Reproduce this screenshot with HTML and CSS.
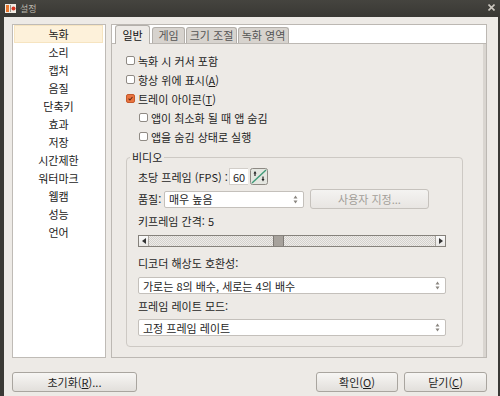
FILE: index.html
```html
<!DOCTYPE html>
<html lang="ko">
<head>
	<meta charset="UTF-8">
	<meta name="viewport" content="width=device-width, initial-scale=1.0">
	<title>설정</title>
	<link rel="stylesheet" href="styles.css">
</head>
<body>
	<div class="window">
		<div class="titlebar">
			<svg class="app-icon" viewBox="0 0 11 9">
				<rect x="0" y="0" width="11" height="9" fill="#f1ece4"/>
				<rect x="1" y="1" width="3" height="7" fill="#e8762d"/>
				<rect x="5" y="1" width="1" height="7" fill="#9a9288"/>
				<circle cx="8.5" cy="4.5" r="2" fill="#d9331f"/>
			</svg>
			<span class="title">설정</span>
			<svg class="close" viewBox="0 0 7 7">
				<path d="M0.5 0.5 L6.5 6.5 M6.5 0.5 L0.5 6.5" stroke="#cbc7bf" stroke-width="1.6"/>
			</svg>
		</div>

		<div class="content">
			<div class="main">
				<ul class="sidebar">
					<li class="active">녹화</li>
					<li>소리</li>
					<li>캡처</li>
					<li>음질</li>
					<li>단축키</li>
					<li>효과</li>
					<li>저장</li>
					<li>시간제한</li>
					<li>워터마크</li>
					<li>웹캠</li>
					<li>성능</li>
					<li>언어</li>
				</ul>

				<div class="tabs">
					<div class="tab-bar">
						<div class="tab active t-general">일반</div>
						<div class="tab t-game">게임</div>
						<div class="tab t-size">크기 조절</div>
						<div class="tab t-area">녹화 영역</div>
					</div>

					<div class="tab-body">
						<div class="check"><span class="box"></span><span>녹화 시 커서 포함</span></div>
						<div class="check"><span class="box"></span><span>항상 위에 표시(<u>A</u>)</span></div>
						<div class="check"><span class="box checked"><svg viewBox="0 0 9 9"><path d="M2 4.6 L3.8 6.4 L7 2.6" fill="none" stroke="#5a2a14" stroke-width="1.3"/></svg></span><span>트레이 아이콘(<u>T</u>)</span></div>
						<div class="check sub"><span class="box"></span><span>앱이 최소화 될 때 앱 숨김</span></div>
						<div class="check sub"><span class="box"></span><span>앱을 숨김 상태로 실행</span></div>

						<fieldset class="group">
							<legend>비디오</legend>

							<div class="fps-row">
								<span class="fps-label">초당 프레임 (FPS) :</span>
								<span class="spin-input">60</span>
								<svg class="spin-btn" viewBox="0 0 18 17">
									<rect x="0.5" y="0.5" width="17" height="16" rx="2" fill="#e4e6e0" stroke="#8e8a84"/>
									<path d="M2 15 L16 2" stroke="#3f9a78" stroke-width="1.4"/>
									<path d="M3.5 5.5 L5 3 L6.5 5.5 Z" fill="#222"/>
									<rect x="4.4" y="5" width="1.2" height="3" fill="#222"/>
									<path d="M11.5 11 L13 13.5 L14.5 11 Z" fill="#222"/>
									<rect x="12.4" y="8.5" width="1.2" height="3" fill="#222"/>
								</svg>
							</div>

							<div class="quality-row">
								<span class="quality-label">품질:</span>
								<div class="combo quality-combo">
									<span>매우 높음</span>
									<svg class="updown" viewBox="0 0 5 9"><path d="M0.5 3.5 L2.5 0.5 L4.5 3.5 Z M0.5 5.5 L2.5 8.5 L4.5 5.5 Z" fill="#8a8680"/></svg>
								</div>
								<div class="btn disabled custom">사용자 지정...</div>
							</div>

							<div class="label key-label">키프레임 간격: 5</div>

							<div class="slider">
								<span class="arrow"><svg viewBox="0 0 4 6"><path d="M4 0 L0 3 L4 6 Z" fill="#333"/></svg></span>
								<div class="trough">
									<span class="thumb" style="left: 124px"></span>
								</div>
								<span class="arrow"><svg viewBox="0 0 4 6"><path d="M0 0 L4 3 L0 6 Z" fill="#333"/></svg></span>
							</div>

							<div class="label dec-label">디코더 해상도 호환성:</div>
							<div class="combo wide">
								<span>가로는 8의 배수, 세로는 4의 배수</span>
								<svg class="updown" viewBox="0 0 5 9"><path d="M0.5 3.5 L2.5 0.5 L4.5 3.5 Z M0.5 5.5 L2.5 8.5 L4.5 5.5 Z" fill="#8a8680"/></svg>
							</div>

							<div class="label mode-label">프레임 레이트 모드:</div>
							<div class="combo wide last">
								<span>고정 프레임 레이트</span>
								<svg class="updown" viewBox="0 0 5 9"><path d="M0.5 3.5 L2.5 0.5 L4.5 3.5 Z M0.5 5.5 L2.5 8.5 L4.5 5.5 Z" fill="#8a8680"/></svg>
							</div>
						</fieldset>
					</div>
				</div>
			</div>

			<div class="footer">
				<div class="btn reset">초기화(<u>R</u>)...</div>
				<div class="spacer"></div>
				<div class="btn ok">확인(<u>O</u>)</div>
				<div class="btn cancel">닫기(<u>C</u>)</div>
			</div>
		</div>
	</div>
</body>
</html>
```

FILE: styles.css
```css
*{
	box-sizing: border-box;
}

body{
	margin: 0;
	background: #2b2a27;
	font-family: "Noto Sans CJK KR", "Noto Sans", sans-serif;
	font-size: 11px;
	color: #1e1e1e;
}

.window{
	width: 500px;
	height: 396px;
	display: flex;
	flex-direction: column;
	overflow: hidden;
}

/* title bar */
.titlebar{
	height: 17px;
	flex: none;
	display: flex;
	align-items: center;
	padding-left: 5px;
	background: linear-gradient(#45443f, #393834);
}

.app-icon{
	width: 11px;
	height: 9px;
}

.title{
	margin-left: 4px;
	font-size: 9px;
	line-height: 10px;
	color: #b9b4ab;
}

.close{
	width: 7px;
	height: 7px;
	margin-left: auto;
	margin-right: 5px;
	margin-top: -3px;
}

/* window body */
.content{
	flex: 1;
	background: #edeae6;
	border-left: 4px solid #3a3935;
	border-right: 2px solid #3a3935;
	padding: 7px 11px 0 8px;
	display: flex;
	flex-direction: column;
}

.main{
	height: 334px;
	display: flex;
	gap: 5px;
}

.sidebar{
	width: 94px;
	margin: 0;
	padding: 0 2px 0 1px;
	list-style: none;
	background: #fff;
	border: 1px solid #bfbbb6;
}

.sidebar li{
	height: 18px;
	line-height: 17px;
	text-align: center;
	color: #1a1a1a;
	border: 1px solid transparent;
}

.sidebar li.active{
	background: #fdf1da;
	border-color: #f6e4c0;
}

/* tabs */
.tabs{
	width: 376px;
	display: flex;
	flex-direction: column;
}

.tab-bar{
	height: 19px;
	flex: none;
	display: flex;
	align-items: flex-end;
	padding-left: 3px;
	background: #fff;
	border: 1px solid #bcb8b3;
	border-bottom: none;
}

.tab{
	height: 16px;
	line-height: 15px;
	text-align: center;
	background: #d7d3ce;
	color: #555;
	border: 1px solid #b3afaa;
	border-bottom: none;
	border-radius: 3px 3px 0 0;
	margin-right: 1px;
}

.tab.active{
	height: 19px;
	line-height: 18px;
	margin-bottom: -1px;
	margin-right: 2px;
	position: relative;
	z-index: 1;
	background: #edeae6;
	color: #111;
}

.t-general{ width: 35px; }
.t-game{ width: 33px; }
.t-size{ width: 51px; }
.t-area{ width: 51px; }

.tab-body{
	flex: 1;
	border: 1px solid #bcb8b3;
	box-shadow: inset -3px 0 0 #d9d5d0;
	padding: 7px 0 0 14px;
}

.check{
	height: 19px;
	display: flex;
	align-items: center;
	gap: 3px;
}

.check.sub{
	margin-left: 13px;
}

.box{
	width: 9px;
	height: 9px;
	background: #fff;
	border: 1px solid #8f8a84;
	border-radius: 2px;
	display: flex;
}

.box.checked{
	background: #ea7440;
	border-color: #c45a2c;
}

.box svg{
	width: 7px;
	height: 7px;
}

/* video group */
.group{
	width: 337px;
	margin: 4px 0 0 0;
	padding: 4px 16px 10px 11px;
	border: 1px solid #cdc9c4;
	border-radius: 4px;
}

.group legend{
	margin-left: -8px;
	padding: 0 2px;
	line-height: 14px;
	color: #222;
}

.fps-row{
	height: 17px;
	display: flex;
	align-items: center;
}

.fps-label{
	width: 91px;
}

.spin-input{
	width: 19px;
	height: 17px;
	line-height: 16px;
	text-align: center;
	background: #fff;
	border: 1px solid #d2cec9;
	border-right: none;
}

.spin-btn{
	width: 18px;
	height: 17px;
	margin-left: 2px;
}

.quality-row{
	height: 20px;
	margin-top: 4px;
	display: flex;
	align-items: center;
}

.quality-label{
	width: 26px;
}

.combo{
	height: 17px;
	display: flex;
	align-items: center;
	justify-content: space-between;
	padding: 0 5px 0 4px;
	background: #fff;
	border: 1px solid #c4c0bb;
	border-radius: 2px;
}

.updown{
	width: 5px;
	height: 9px;
}

.quality-combo{
	width: 140px;
}

.btn{
	height: 20px;
	line-height: 18px;
	text-align: center;
	background: linear-gradient(#f7f6f4, #e2dfdb);
	border: 1px solid #a9a59f;
	border-radius: 3px;
	color: #1e1e1e;
}

.btn.disabled{
	color: #a29e98;
	border-color: #c6c2bd;
	background: linear-gradient(#f4f3f1, #e8e5e2);
}

.custom{
	width: 119px;
	margin-left: 6px;
}

.label{
	height: 16px;
	line-height: 16px;
}

.key-label{ margin-top: 4px; }
.dec-label{ margin-top: 8px; }
.mode-label{ margin-top: 4px; }

.slider{
	width: 308px;
	height: 12px;
	margin-top: 6px;
	display: flex;
	border: 1px solid #85817b;
}

.slider .arrow{
	width: 10px;
	flex: none;
	display: flex;
	align-items: center;
	justify-content: center;
	background: linear-gradient(#fafafa, #e9e7e4);
}

.slider .arrow:first-child{ border-right: 1px solid #aaa6a0; }
.slider .arrow:last-child{ border-left: 1px solid #aaa6a0; }

.slider .arrow svg{
	width: 4px;
	height: 6px;
}

.trough{
	flex: 1;
	position: relative;
	background: repeating-conic-gradient(#d4d1cd 0 25%, #eeece9 0 50%) 0 0 / 2px 2px;
}

.thumb{
	position: absolute;
	top: 0;
	bottom: 0;
	width: 11px;
	background: #a7a29c;
	border-left: 1px solid #7e7a75;
	border-right: 1px solid #7e7a75;
}

.combo.wide{
	width: 308px;
	margin-top: 6px;
}

.combo.last{
	margin-top: 5px;
}

/* footer */
.footer{
	margin-top: 14px;
	display: flex;
	gap: 6px;
}

.spacer{
	flex: 1;
}

.reset{ width: 125px; }
.ok{ width: 82px; }
.cancel{ width: 83px; }
```
